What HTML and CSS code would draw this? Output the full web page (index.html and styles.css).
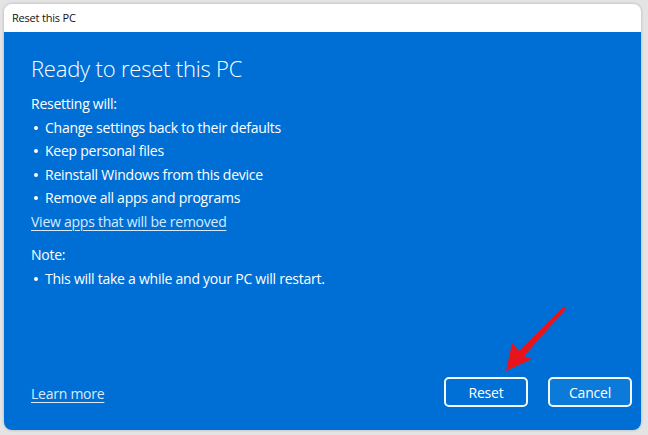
FILE: index.html
```html
<!DOCTYPE html>
<html lang="en">
<head>
    <meta charset="UTF-8">
    <meta name="viewport" content="width=device-width, initial-scale=1.0">
    <title>Reset this PC</title>
    <link rel="stylesheet" href="styles.css">
</head>
<body>
    <div class="window">
        <div class="titlebar">Reset this PC</div>

        <div class="panel">
            <h1>Ready to reset this PC</h1>

            <p>Resetting will:</p>
            <ul>
                <li>Change settings back to their defaults</li>
                <li>Keep personal files</li>
                <li>Reinstall Windows from this device</li>
                <li>Remove all apps and programs</li>
            </ul>
            <a class="link" href="#">View apps that will be removed</a>

            <p class="note">Note:</p>
            <ul>
                <li>This will take a while and your PC will restart.</li>
            </ul>

            <div class="footer">
                <a class="link learn" href="#">Learn more</a>
                <div class="buttons">
                    <button class="btn">Reset</button>
                    <button class="btn btn-light">Cancel</button>
                </div>
            </div>

            <!-- red pointer drawn over the screenshot -->
            <svg class="arrow" width="70" height="70" viewBox="0 0 70 70">
                <path d="M2 66 L8 38 L15 46 L59 2 Q62 1 61 5 L20 51 L28 54 Z" fill="#e8141b"/>
            </svg>
        </div>
    </div>
</body>
</html>
```

FILE: styles.css
```css
/* Page */
* {
    margin: 0;
    padding: 0;
    box-sizing: border-box;
}

body {
    background: #e4e4e4;
    padding: 4px 7px 5px 4px;
    font-family: 'Open Sans', 'Noto Sans', sans-serif;
    overflow: hidden;
}

.window {
    width: 637px;
    height: 426px;
    border-radius: 8px;
    overflow: hidden;
    box-shadow: 0 0 3px rgba(0, 0, 0, 0.25);
    display: flex;
    flex-direction: column;
}

.titlebar {
    height: 28px;
    background: #fff;
    color: #111;
    font-size: 11px;
    letter-spacing: -0.2px;
    line-height: 28px;
    padding-left: 8px;
}

.panel {
    position: relative;
    flex: 1;
    background: #006fd5;
    color: #fff;
    padding: 20px 9px 23px 27px;
    display: flex;
    flex-direction: column;
    font-size: 14px;
    letter-spacing: -0.25px;
    line-height: 23.5px;
}

h1 {
    font-size: 22px;
    font-weight: 300;
    letter-spacing: -0.2px;
    line-height: 32px;
    margin-bottom: 8px;
}

ul {
    list-style: none;
}

ul li {
    position: relative;
    padding-left: 14px;
}

ul li::before {
    content: "";
    position: absolute;
    left: 3px;
    top: 10px;
    width: 4px;
    height: 4px;
    border-radius: 50%;
    background: #fff;
}

.link {
    color: #d9eafc;
    text-decoration: underline;
    text-underline-offset: 3px;
    text-decoration-thickness: 1px;
    align-self: flex-start;
}

.note {
    margin-top: 10px;
}

.footer {
    margin-top: auto;
    display: flex;
    align-items: center;
    justify-content: space-between;
}

.learn {
    align-self: center;
    margin-top: 4px;
}

.buttons {
    display: flex;
    gap: 20px;
}

.btn {
    width: 84px;
    height: 30px;
    border: 2px solid #f2f7fd;
    border-radius: 5px;
    background: #0070d6;
    color: #fff;
    font-family: inherit;
    font-size: 14px;
    letter-spacing: -0.2px;
}

.btn-light {
    background: #0b7ad9;
}

.arrow {
    position: absolute;
    left: 500px;
    top: 273px;
}
```
